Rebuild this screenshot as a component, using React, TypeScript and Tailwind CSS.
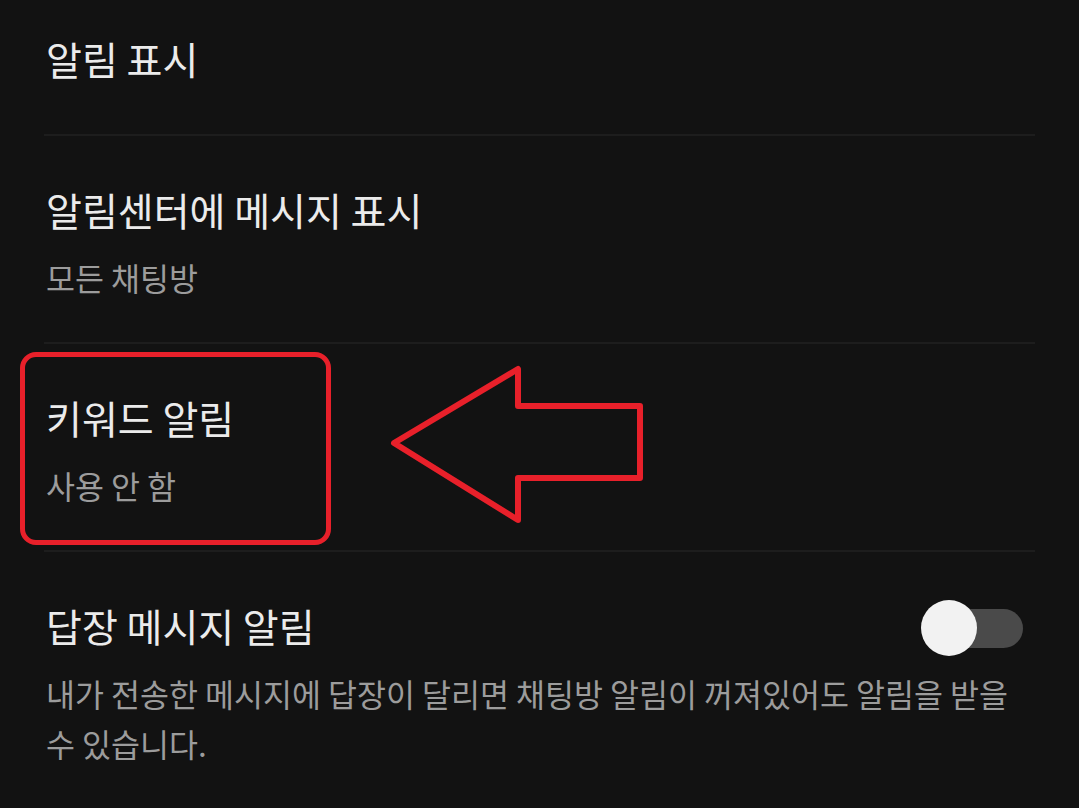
import React from "react";

const font = { fontFamily: '"Noto Sans CJK KR", "Noto Sans", sans-serif' };

export default function App() {
  return (
    <div className="relative w-[1079px] h-[808px] overflow-hidden bg-[#121212]" style={font}>
      <div className="flex flex-col px-[44px]">
        <div className="pt-[34px] pb-[52px] px-[2px]">
          <div className="text-[39px] leading-[48px] text-[#ebebeb]">알림 표시</div>
        </div>
        <div className="h-[2px] bg-[#1d1d1d]" />
        <div className="pt-[49px] pb-[45px] px-[2px] flex flex-col gap-[24px]">
          <div className="text-[39px] leading-[48px] text-[#ebebeb]">알림센터에 메시지 표시</div>
          <div className="text-[31.5px] leading-[40px] text-[#9c9c9c]">모든 채팅방</div>
        </div>
        <div className="h-[2px] bg-[#1d1d1d]" />
        <div className="pt-[49px] pb-[45px] px-[2px] flex flex-col gap-[24px]">
          <div className="text-[39px] leading-[48px] text-[#ebebeb]">키워드 알림</div>
          <div className="text-[31.5px] leading-[40px] text-[#9c9c9c]">사용 안 함</div>
        </div>
        <div className="h-[2px] bg-[#1d1d1d]" />
        <div className="pt-[49px] px-[2px] flex flex-col gap-[19px]">
          <div className="flex items-center justify-between">
            <div className="text-[39px] leading-[48px] text-[#ebebeb]">답장 메시지 알림</div>
            <div className="relative w-[102px] h-[48px] mr-[10px] flex items-center translate-y-[3px]">
              <div className="ml-[8px] w-[94px] h-[39px] rounded-full bg-[#4a4a4a]" />
              <div className="absolute left-0 top-[-4px] w-[56px] h-[56px] rounded-full bg-[#f2f2f2]" />
            </div>
          </div>
          <div className="text-[31.5px] leading-[50px] text-[#9c9c9c] break-keep">
            내가 전송한 메시지에 답장이 달리면 채팅방 알림이 꺼져있어도 알림을 받을 수 있습니다.
          </div>
        </div>
      </div>

      {/* annotation overlay */}
      <div className="absolute left-[20px] top-[352px] w-[311px] h-[193px] rounded-[16px] border-[5px] border-[#e8202a]" />
      <svg className="absolute left-0 top-0" width="1079" height="808" viewBox="0 0 1079 808">
        <polygon
          points="394,443 518,369 518,406 640,406 640,478 518,478 518,520"
          fill="none"
          stroke="#e8202a"
          strokeWidth="6"
          strokeLinejoin="round"
        />
      </svg>
    </div>
  );
}
